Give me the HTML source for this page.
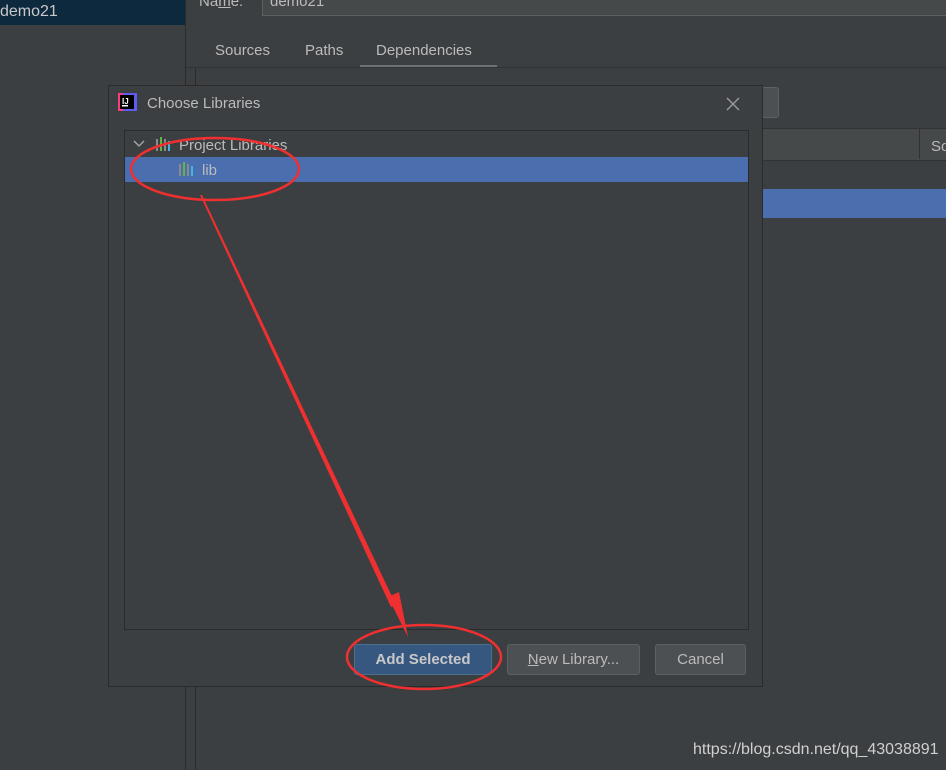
<!DOCTYPE html><html><head><style>
body{margin:0;width:946px;height:770px;background:#3c3f41;position:relative;overflow:hidden;font-family:"Liberation Sans",sans-serif;color:#bbbbbb;font-size:15px}
.a{position:absolute}
.btn{position:absolute;top:644px;height:31px;border:1px solid #5e6060;border-radius:3px;background:#4c5052;box-sizing:border-box;text-align:center;line-height:29px;font-size:15px}
</style></head><body>
<div class="a" style="left:0;top:0;width:185px;height:25px;background:#0d293e"></div>
<div class="a" style="left:0px;top:3px;color:#c8c8c8;font-size:16px">demo21</div>
<div class="a" style="left:185px;top:0;width:1px;height:770px;background:#2b2b2b"></div>
<div class="a" style="left:199px;top:-7px">Na<u>m</u>e:</div>
<div class="a" style="left:262px;top:-2px;width:690px;height:16px;border:1px solid #5e6060;background:#45494a"></div>
<div class="a" style="left:270px;top:-7px">demo21</div>
<div class="a" style="left:215px;top:42px">Sources</div>
<div class="a" style="left:305px;top:42px">Paths</div>
<div class="a" style="left:376px;top:42px">Dependencies</div>
<div class="a" style="left:360px;top:65px;width:137px;height:3px;background:#6c7175"></div>
<div class="a" style="left:186px;top:67px;width:760px;height:1px;background:#323232"></div>
<div class="a" style="left:195px;top:68px;width:1px;height:702px;background:#2b2b2b"></div>
<div class="a" style="left:755px;top:87px;width:22px;height:29px;border:1px solid #5e6060;border-radius:3px;background:#4c5052"></div>
<div class="a" style="left:763px;top:128px;width:183px;height:31px;background:#45494a;border-top:1px solid #323232;border-bottom:1px solid #323232"></div>
<div class="a" style="left:919px;top:129px;width:1px;height:30px;background:#323232"></div>
<div class="a" style="left:931px;top:138px">So</div>
<div class="a" style="left:763px;top:189px;width:183px;height:29px;background:#4b6eaf"></div>
<div class="a" style="left:108px;top:85px;width:655px;height:602px;background:#3c3f41;border:1px solid #2b2b2b;box-sizing:border-box"></div>
<svg class="a" style="left:117px;top:92px" width="22" height="22"><rect x="1" y="1" width="18" height="18" fill="#fc3b7c"/><rect x="6" y="1" width="14" height="18" fill="#5c5cf0"/><rect x="3" y="3" width="14" height="14" fill="#000"/><text x="5" y="12" fill="#fff" font-size="8" font-family="Liberation Sans" font-weight="bold">IJ</text><rect x="5" y="13" width="6" height="1.5" fill="#fff"/></svg>
<div class="a" style="left:147px;top:95px;color:#bbbbbb">Choose Libraries</div>
<svg class="a" style="left:726px;top:97px" width="14" height="14"><path d="M1 1L13 13M13 1L1 13" stroke="#9a9a9a" stroke-width="1.4"/></svg>
<div class="a" style="left:124px;top:130px;width:625px;height:500px;background:#3c3f41;border:1px solid #2b2b2b;box-sizing:border-box"></div>
<svg class="a" style="left:133px;top:138px" width="12" height="12"><path d="M1 3L6 8L11 3" stroke="#aaa" stroke-width="1.3" fill="none"/></svg>
<svg class="a" style="left:156px;top:137px" width="18" height="14"><rect x="0" y="2" width="2" height="12" fill="#8a8a8a"/><rect x="4" y="0" width="2" height="14" fill="#62b543"/><rect x="8" y="2" width="2" height="12" fill="#8a8a8a"/><rect x="12" y="4" width="2" height="10" fill="#40b6e0"/></svg>
<div class="a" style="left:179px;top:137px">Project Libraries</div>
<div class="a" style="left:125px;top:157px;width:623px;height:25px;background:#4b6eaf"></div>
<svg class="a" style="left:179px;top:162px" width="18" height="14"><rect x="0" y="2" width="2" height="12" fill="#8a8a8a"/><rect x="4" y="0" width="2" height="14" fill="#62b543"/><rect x="8" y="2" width="2" height="12" fill="#8a8a8a"/><rect x="12" y="4" width="2" height="10" fill="#40b6e0"/></svg>
<div class="a" style="left:202px;top:162px">lib</div>
<div class="btn" style="left:354px;width:138px;background:#365880;border-color:#4c708c;font-weight:bold;color:#c8c8c8">Add Selected</div>
<div class="btn" style="left:507px;width:133px"><u>N</u>ew Library...</div>
<div class="btn" style="left:655px;width:91px">Cancel</div>
<div class="a" style="left:693px;top:741px;color:#d0d0d0;font-size:16px">https://blog.csdn.net/qq_43038891</div>
<svg class="a" style="left:0;top:0" width="946" height="770">
<ellipse cx="215" cy="169" rx="84" ry="31" fill="none" stroke="#f03030" stroke-width="2.5"/>
<ellipse cx="424" cy="657" rx="77" ry="32" fill="none" stroke="#f03030" stroke-width="2.5"/>
<path d="M200 195L202 195L396 605L391 607Z" fill="#f03030"/>
<path d="M388 597L399 592L408 637Z" fill="#f03030"/>
</svg>
</body></html>
